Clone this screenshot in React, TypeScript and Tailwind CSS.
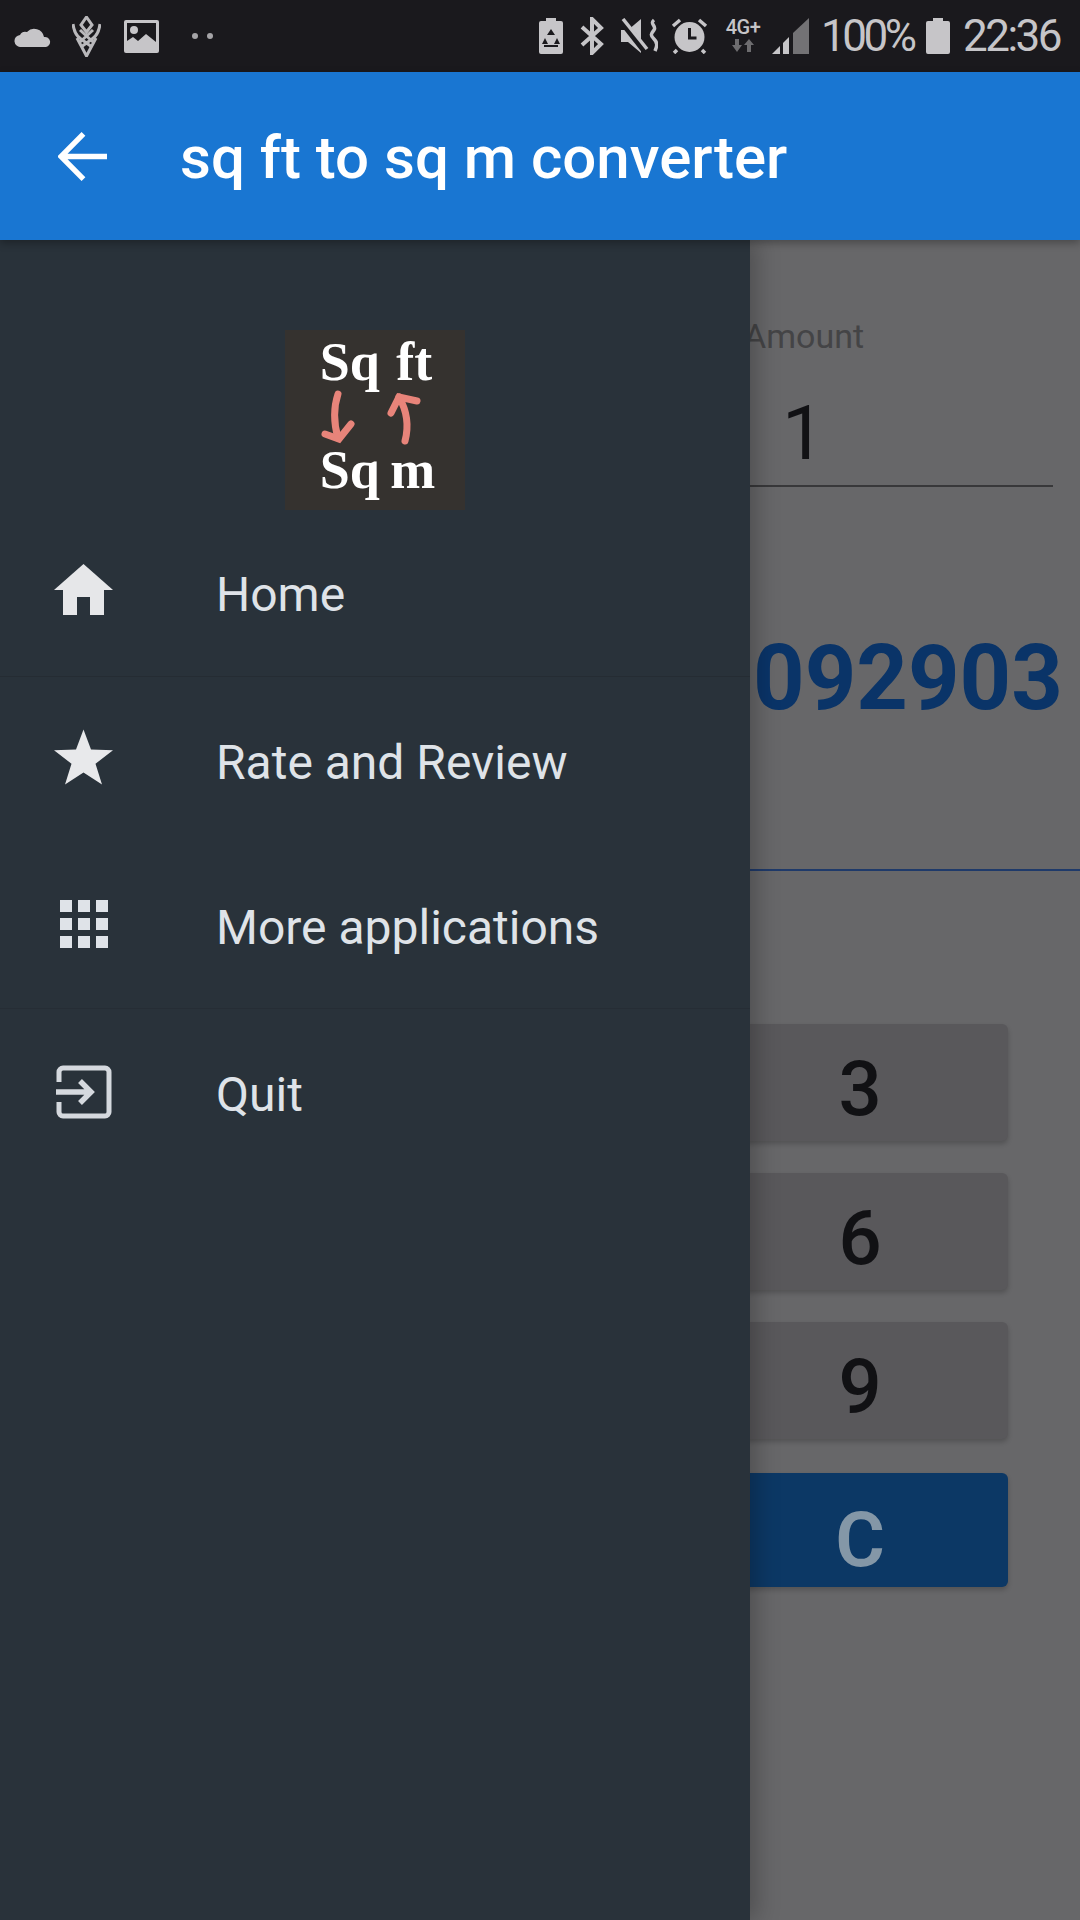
const font = { fontFamily: "Roboto, sans-serif" }

const StatusLeft = () => (
  <div className="flex items-center">
    <svg className="ml-[14px] w-[38px] h-[22px]" viewBox="0 0 38 22" fill="#c6c5c8">
      <path d="M7 22a6 6 0 0 1-1-12 6 6 0 0 1 7-3 10 10 0 0 1 17 5 5 5 0 0 1 2 10z" />
    </svg>
    <svg className="ml-[20px] w-[29px] h-[41px]" viewBox="0 0 29 41" fill="none" stroke="#b9b8bb" strokeWidth="3">
      <path d="M14.5 1 20 9l-5.500 7L9 9z" />
      <path d="M1 8c1 8 3 12 8 15l11 8M28 8c-1 8-3 12-8 15L9 31" />
      <path d="M5 22l9.500 18L24 22M8 14l13 12M21 14 8 26" />
    </svg>
    <svg className="ml-[23px] w-[35px] h-[33px]" viewBox="0 0 35 33">
      <rect width="35" height="33" rx="2" fill="#c6c5c8" />
      <rect x="3" y="3" width="29" height="22" fill="#1a191d" />
      <circle cx="10" cy="10" r="4" fill="#c6c5c8" />
      <path d="M3 27v-6l6-4 5 4 8-7 10 8v5z" fill="#c6c5c8" />
    </svg>
    <div className="ml-[33px] w-[6px] h-[6px] rounded-full bg-[#a5a4a7]" />
    <div className="ml-[9px] w-[6px] h-[6px] rounded-full bg-[#a5a4a7]" />
  </div>
)

const StatusRight = () => (
  <div className="flex items-center text-[#c6c5c8]">
    <svg className="w-[24px] h-[36px]" viewBox="0 0 24 36">
      <path d="M7 0h10v3h5a2 2 0 0 1 2 2v29a2 2 0 0 1-2 2H2a2 2 0 0 1-2-2V5a2 2 0 0 1 2-2h5z" fill="#c6c5c8" />
      <path d="M12 11l4 6H8zM6 20l3 6H3zM18 20l3 6h-6z" fill="#1a191d" />
      <path d="M5 28h14" stroke="#1a191d" strokeWidth="2" />
    </svg>
    <svg className="ml-[17px] w-[24px] h-[38px]" viewBox="0 0 24 38" fill="none" stroke="#c6c5c8" strokeWidth="4">
      <path d="M2 10l19 17-9 9V2l9 9L2 28" />
    </svg>
    <svg className="ml-[17px] w-[37px] h-[36px]" viewBox="0 0 37 36" fill="#c6c5c8">
      <path d="M0 12h7l13-11v34L7 24H0z" />
      <path d="M0 2l25 32" stroke="#1a191d" strokeWidth="7" />
      <path d="M2 1l24 30" stroke="#c6c5c8" strokeWidth="3.500" />
      <path d="M33 2c-5 4 3 6 0 10s-4 5 0 9 3 7 1 12" fill="none" stroke="#c6c5c8" strokeWidth="3.500" />
    </svg>
    <svg className="ml-[13px] w-[37px] h-[36px]" viewBox="0 0 37 36">
      <circle cx="18.500" cy="19" r="15" fill="#c6c5c8" />
      <path d="M18.500 10v10h7" fill="none" stroke="#1a191d" strokeWidth="3" />
      <path d="M2 8l7-6M35 8l-7-6M6 32l-3 3M31 32l3 3" stroke="#c6c5c8" strokeWidth="3.500" />
    </svg>
    <div className="ml-[16px] w-[38px] h-[36px] flex flex-col items-center">
      <span className="text-[20px] leading-[18px] font-medium tracking-[-0.5px]">4G+</span>
      <svg className="mt-[3px] w-[22px] h-[13px]" viewBox="0 0 22 13" fill="#6d6c6f">
        <path d="M3 0h4v6h3l-5 7-5-7h3zM15 13h4V6h3l-5-6-5 6h3z" />
      </svg>
    </div>
    <svg className="ml-[10px] w-[37px] h-[36px]" viewBox="0 0 37 36">
      <path d="M0 36l8-8v8z" fill="#c6c5c8" />
      <path d="M11 25l6-6v17h-6z" fill="#c6c5c8" />
      <path d="M21 15L37 0v36H21z" fill="#737275" />
    </svg>
    <span className="ml-[12px] w-[92px] text-[44px] leading-[44px] tracking-[-3.500px] whitespace-nowrap">100%</span>
    <svg className="ml-[13px] w-[24px] h-[36px]" viewBox="0 0 24 36" fill="#c6c5c8">
      <path d="M7 0h10v3h5a2 2 0 0 1 2 2v29a2 2 0 0 1-2 2H2a2 2 0 0 1-2-2V5a2 2 0 0 1 2-2h5z" />
    </svg>
    <span className="ml-[13px] mr-[21px] w-[96px] text-[44px] leading-[44px] tracking-[-2.500px] whitespace-nowrap">22:36</span>
  </div>
)

const HomeIcon = () => (
  <svg className="w-[59px] h-[51px]" viewBox="0 0 59 51" fill="#e6e7e9">
    <path d="M9 26h41v25H36V33H23v18H9z" />
    <path d="M29.500 0 59 26H0z" />
  </svg>
)

const StarIcon = () => (
  <svg className="w-[59px] h-[56px]" viewBox="0 0 59 55" fill="#e8e9eb">
    <path d="M29.500 0l7.500 20 22 .8-17.500 13.500L48 55 29.500 43 11 55l6.500-20.700L0 20.800 22 20z" />
  </svg>
)

const GridIcon = () => (
  <div className="w-[48px] grid grid-cols-3 gap-x-[6px] gap-y-[6px]">
    {Array.from({ length: 9 }).map((_, i) => (
      <div key={i} className="h-[12px] bg-[#dfe3e8]" />
    ))}
  </div>
)

const QuitIcon = () => (
  <svg className="w-[56px] h-[54px]" viewBox="0 0 56 54" fill="none" stroke="#d5d9de" strokeWidth="5">
    <path d="M3 17V7a4 4 0 0 1 4-4h42a4 4 0 0 1 4 4v40a4 4 0 0 1-4 4H7a4 4 0 0 1-4-4V37" />
    <path d="M0 27h34M24 16l11 11-11 11" strokeWidth="5.500" />
  </svg>
)

const menu = [
  { label: "Home", icon: <HomeIcon />, row: "h-[167px] border-b border-[#252c33]", shift: "-mt-[7px]", text: "pt-[4px]" },
  { label: "Rate and Review", icon: <StarIcon />, row: "h-[168px]", shift: "-mt-[8px]", text: "pt-[4px]" },
  { label: "More applications", icon: <GridIcon />, row: "h-[164px] border-b border-[#262d35]", shift: "-mt-[5px]", text: "pt-[2px]" },
  { label: "Quit", icon: <QuitIcon />, row: "h-[168px]", shift: "-mt-[2px]", text: "pt-[4px]" },
]

const Logo = () => (
  <div className="relative w-[180px] h-[180px] bg-[#35322f] flex flex-col items-center" style={{ fontFamily: "'Liberation Serif', serif" }}>
    <span className="mt-[2px] ml-[2px] text-[54px] leading-[60px] font-bold text-white whitespace-pre [word-spacing:3px]">Sq ft</span>
    <span className="mt-[48px] ml-[5px] text-[54px] leading-[60px] font-bold text-white whitespace-pre [word-spacing:-3px]">Sq m</span>
    <svg className="absolute inset-0" viewBox="0 0 180 180" fill="none" stroke="#e8847a" strokeWidth="7" strokeLinecap="round">
      <path d="M53 64c-5 15-4 30 0 44" />
      <path d="M40 104l14 5 12-15" />
      <path d="M120 111c4-15 2-30-6-44" />
      <path d="M106 83l8-16 18 4" />
    </svg>
  </div>
)

const Key = ({ label }: { label: string }) => (
  <div className="h-[117px] w-[296px] pt-[12px] rounded-md bg-[#59585b] shadow-[0_3px_5px_rgba(0,0,0,0.2)] flex items-center justify-center text-[76px] font-medium text-[#111114]">
    {label}
  </div>
)

export default function App() {
  return (
    <div className="w-[1080px] h-[1920px] overflow-hidden flex flex-col bg-[#676769]" style={font}>
      <div className="h-[72px] shrink-0 bg-[#1a191d] flex items-center justify-between">
        <StatusLeft />
        <StatusRight />
      </div>

      <div className="relative z-20 h-[168px] shrink-0 bg-[#1976d2] shadow-[0_3px_8px_rgba(0,0,0,0.3)] flex items-center">
        <svg className="ml-[58px] w-[49px] h-[49px]" viewBox="0 0 50 50" fill="none" stroke="white" strokeWidth="5.500">
          <path d="M50 25H3M26 2 3 25l23 23" />
        </svg>
        <h1 className="ml-[73px] pt-[4px] text-[60px] font-medium text-white whitespace-nowrap">sq ft to sq m converter</h1>
      </div>

      <div className="flex-1 flex min-h-0">
        <aside className="relative z-10 w-[750px] shrink-0 bg-[#29323a] shadow-[6px_0_22px_rgba(0,0,0,0.25)]">
          <div className="pt-[90px] flex justify-center">
            <Logo />
          </div>
          <nav>
            {menu.map((item) => (
              <div key={item.label} className={`flex items-center ${item.row}`}>
                <div className={`ml-[54px] w-[59px] flex justify-center ${item.shift}`}>{item.icon}</div>
                <span className={`ml-[103px] text-[48px] text-[#dfe3e8] whitespace-nowrap ${item.text}`}>{item.label}</span>
              </div>
            ))}
          </nav>
        </aside>

        <main className="flex-1 min-w-0 overflow-hidden flex flex-col">
          <div className="-ml-[6px] pt-[76px] text-[34px] leading-[40px] text-[#444446]">Amount</div>
          <div className="mr-[27px] h-[131px] border-b-2 border-[#38383a] flex items-end pl-[32px] pb-[14px] text-[76px] leading-none text-[#111114]">1</div>
          <div className="mt-[144px] ml-[3px] text-[90px] leading-[96px] font-bold text-[#0a3468] whitespace-nowrap">092903</div>
          <div className="mt-[142px] h-[2px] bg-[#1f3a6a]" />
          <div className="mt-[153px] -ml-[38px] flex flex-col gap-[32px]">
            <Key label="3" />
            <Key label="6" />
            <Key label="9" />
            <div className="mt-[2px] h-[114px] w-[296px] pt-[20px] rounded-md bg-[#0c3865] shadow-[0_3px_5px_rgba(0,0,0,0.2)] flex items-center justify-center text-[76px] font-semibold text-[#8497a7]">
              C
            </div>
          </div>
        </main>
      </div>
    </div>
  )
}
